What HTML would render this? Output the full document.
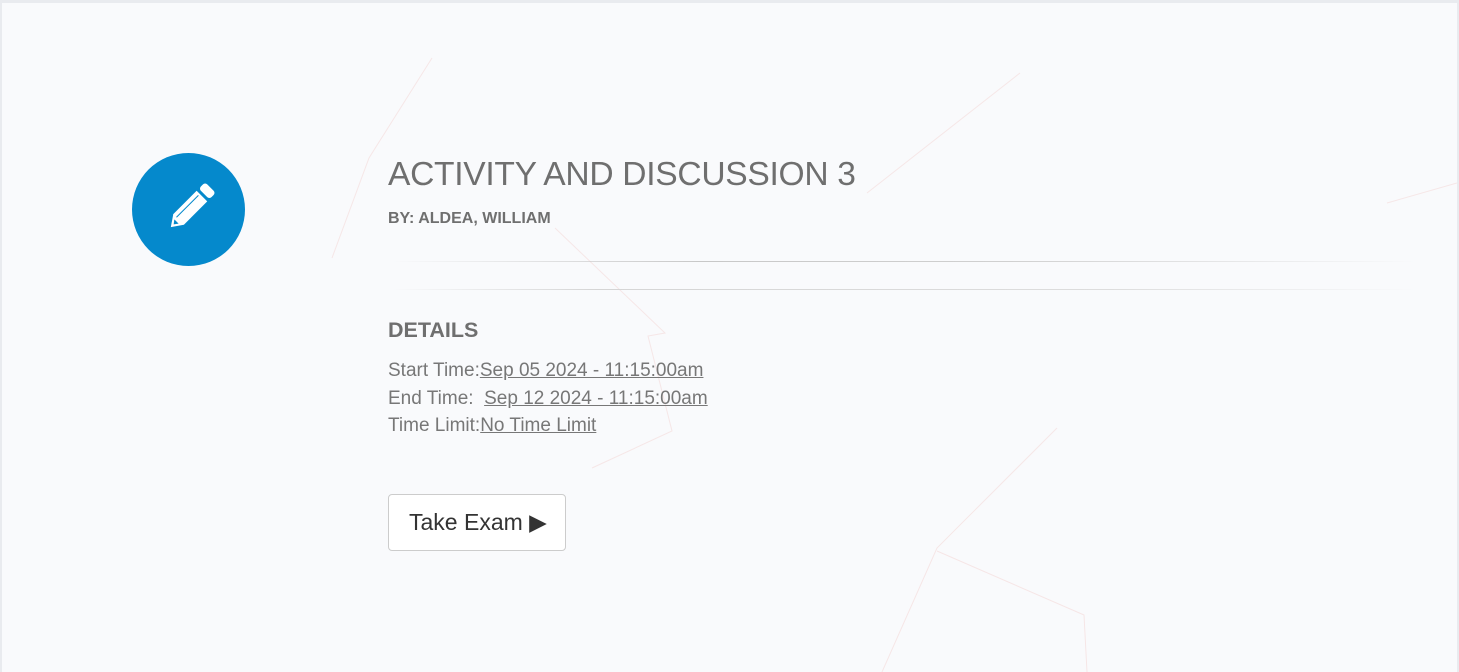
<!DOCTYPE html>
<html><head><style>
html,body{margin:0;padding:0}
body{width:1459px;height:672px;background:#e9ebef;font-family:"Liberation Sans",sans-serif;overflow:hidden;position:relative}
.page{position:absolute;left:2px;top:3px;width:1455px;height:669px;background:#f9fafc;overflow:hidden}
.circle{position:absolute;left:130px;top:150px;width:113px;height:113px;border-radius:50%;background:#0589cc}
.t{position:absolute;left:386px;top:153px;font-size:33.6px;color:#6f6f6f;letter-spacing:-0.3px;white-space:nowrap}
.by{position:absolute;left:386px;top:207px;font-size:16px;font-weight:bold;color:#6f6f6f}
.hr{position:absolute;left:390px;width:1025px;height:1px}
.h1{top:258px;background:linear-gradient(90deg,rgba(200,200,200,0),#c8c8c8 30%,#d0d0d0 60%,rgba(220,220,220,0))}
.h2{top:286px;background:linear-gradient(90deg,rgba(210,210,210,0),#d5d5d5 20%,#ddd 70%,rgba(230,230,230,0))}
.det{position:absolute;left:386px;top:315px;font-size:21.5px;font-weight:bold;color:#6f6f6f}
.rows{position:absolute;left:386px;top:354px;font-size:19px;line-height:27.5px;color:#777;white-space:nowrap}
.rows u{color:#777}
.btn{position:absolute;left:386px;top:491px;width:176px;height:55px;border:1px solid #ccc;border-radius:4px;background:#fff;font-size:23px;color:#333;line-height:55px;box-sizing:content-box}
.btn span{position:absolute;left:20px}
</style></head><body>
<div class="page">
<svg width="1455" height="669" style="position:absolute;left:0;top:0">
<g fill="none" stroke="#f5dede" stroke-width="1" opacity=".7">
<polyline points="430,55 367,155 330,255"/>
<polyline points="1018,70 865,190"/>
<polyline points="553,225 663,330 646,333 670,428 590,465"/>
<polyline points="1055,425 935,545 880,669"/>
<polyline points="935,548 1082,612 1085,669"/>
<polyline points="1385,200 1455,180"/>
</g></svg>
<div class="circle">
<svg width="113" height="113" viewBox="0 0 113 113">
<g transform="translate(56.5 56.5) rotate(45)">
<rect x="-7.5" y="-31" width="15" height="9" rx="3" fill="#fff"/>
<path d="M-7.5 -19 H7.5 V14 L0 25 L-7.5 14 Z" fill="#fff"/>
<line x1="-3" y1="-17" x2="-3" y2="14" stroke="#0589cc" stroke-width="1"/>
<path d="M-3 17 L0 21 L3 17 Z" fill="#0589cc"/>
</g></svg>
</div>
<div class="t">ACTIVITY AND DISCUSSION 3</div>
<div class="by">BY: ALDEA, WILLIAM</div>
<div class="hr h1"></div>
<div class="hr h2"></div>
<div class="det">DETAILS</div>
<div class="rows">Start Time:<u>Sep 05 2024 - 11:15:00am</u><br>End Time:&nbsp; <u>Sep 12 2024 - 11:15:00am</u><br>Time Limit:<u>No Time Limit</u></div>
<div class="btn"><span>Take Exam ▶</span></div>
</div>
</body></html>
